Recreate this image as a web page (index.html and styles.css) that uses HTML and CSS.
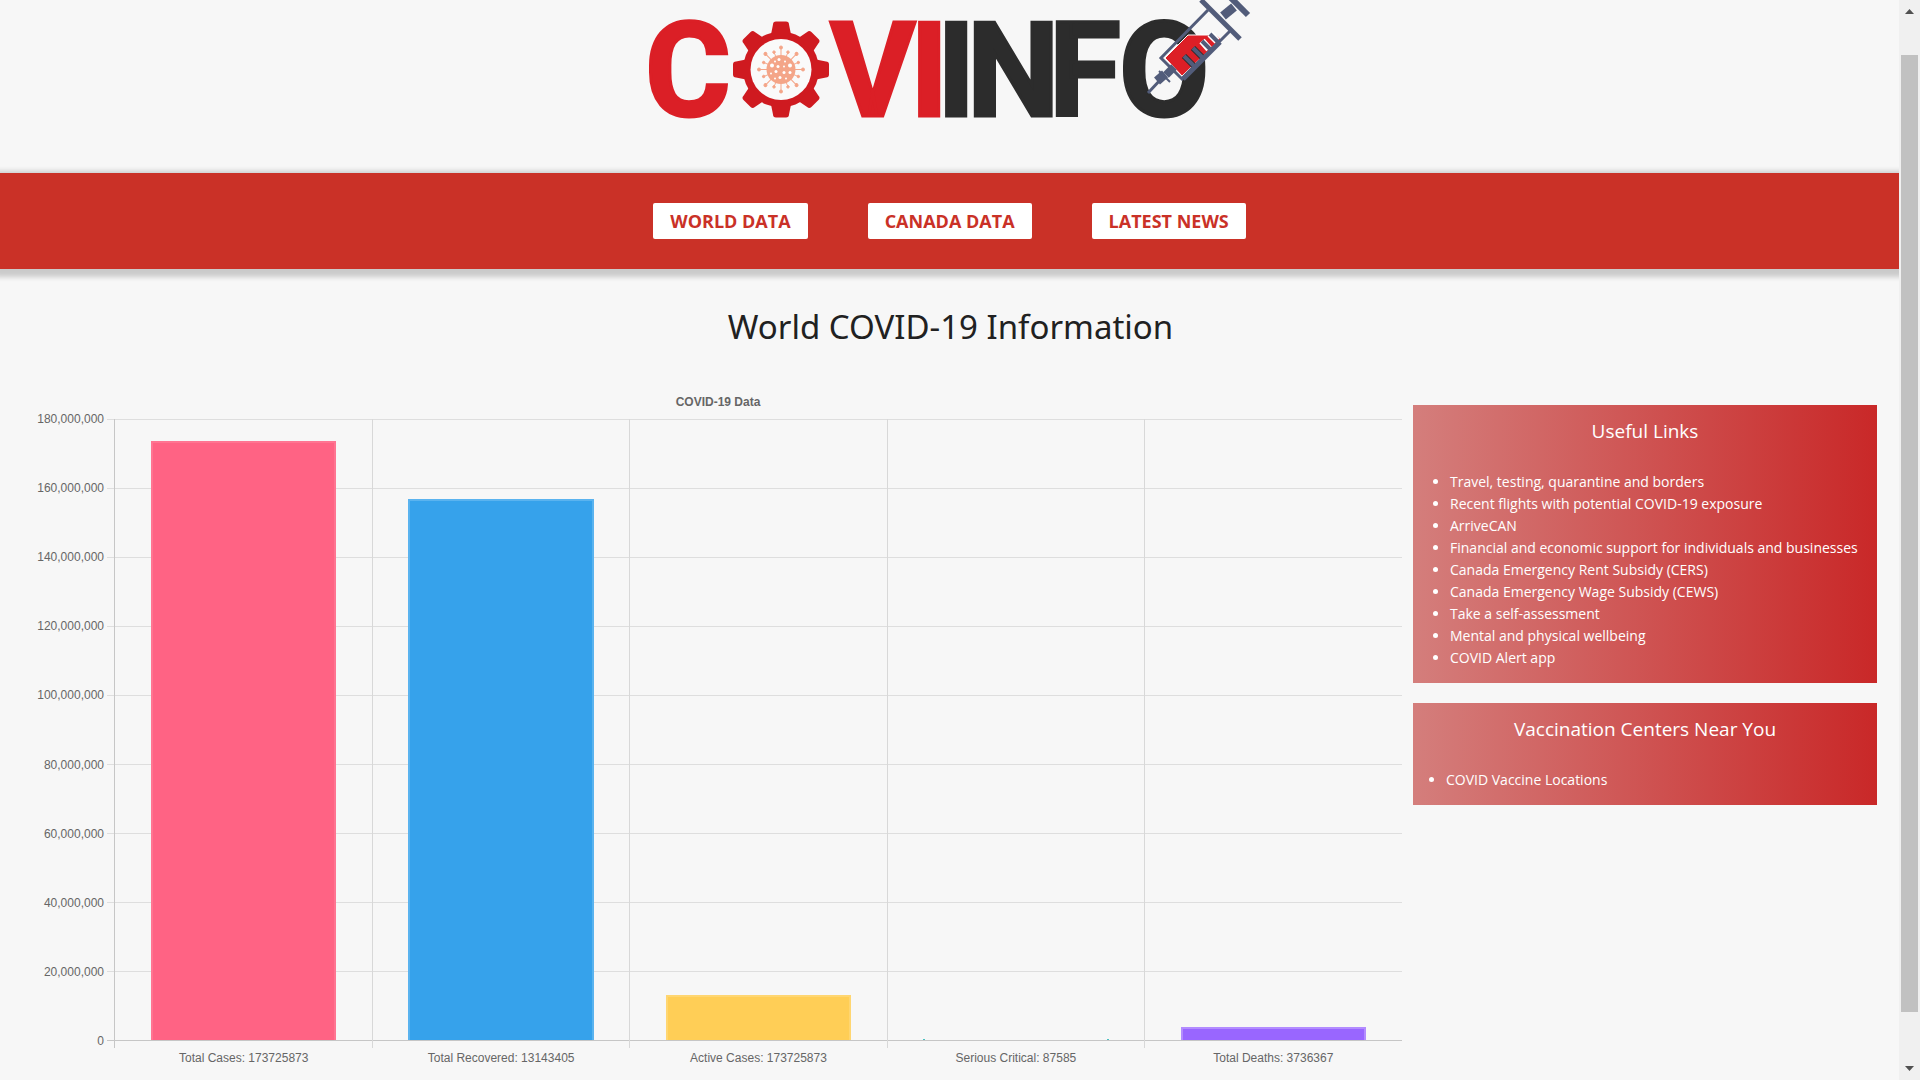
FILE: index.html
```html
<!DOCTYPE html>
<html lang="en">
<head>
<meta charset="utf-8">
<meta name="viewport" content="width=device-width, initial-scale=1">
<title>CoviInfo</title>
<link rel="stylesheet" href="styles.css">
</head>
<body>
<div class="page">
  <header class="header">
    <svg class="logo" viewBox="630 0 640 130" role="img" aria-label="CoviInfo">
      <g class="logo-red">
        <text x="645" y="116">C</text>
        <text x="830" y="116">V</text>
        <text x="910" y="116">I</text>
      </g>
      <g class="logo-dark">
        <text x="937" y="116">I</text>
        <text x="967" y="116">N</text>
        <text x="1049" y="116">F</text>
        <text x="1119" y="116">O</text>
      </g>
      <g transform="translate(781 69.500)">
        <g fill="#cf1a20">
          <circle r="38"/>
          <g id="teeth">
            <path id="tooth" d="M-10-35 L-8-45 Q-8-48-5-48 H5 Q8-48 8-45 L10-35Z"/>
            <use href="#tooth" transform="rotate(90)"/>
            <use href="#tooth" transform="rotate(180)"/>
            <use href="#tooth" transform="rotate(270)"/>
          </g>
          <use href="#teeth" transform="rotate(45)"/>
        </g>
        <circle r="30.500" fill="#fafafa"/>
        <g fill="#f4a588" stroke="#f4a588">
          <circle r="14.500" stroke="none"/>
          <g id="spikes">
            <g id="spike"><path d="M0-13V-22"/><circle cy="-22" r="1.500"/></g>
            <use href="#spike" transform="rotate(90)"/>
            <use href="#spike" transform="rotate(180)"/>
            <use href="#spike" transform="rotate(270)"/>
          </g>
          <use href="#spikes" transform="rotate(45)"/>
          <g transform="scale(.85)">
            <use href="#spikes" transform="rotate(22)"/>
            <use href="#spikes" transform="rotate(68)"/>
          </g>
        </g>
        <g fill="#fff">
          <circle cx="-2" cy="-10" r="1.500"/><circle cx="4" cy="-8" r="1"/><circle cx="-9" cy="-4" r="2"/>
          <circle cx="9" cy="-4" r="2"/><circle cx="-3" cy="-3" r="1.500"/><circle cx="3" cy="-3" r="1"/>
          <circle cx="-5" cy="2" r="1.500"/><circle cx="3" cy="3" r="1.500"/><circle cx="9" cy="3" r="1.500"/>
          <circle cx="-10" cy="4" r="1"/><circle cx="-1" cy="8" r="1.500"/><circle cx="5" cy="9" r="1"/>
          <circle cx="-6" cy="9" r="1"/><circle cx="-6" cy="-8" r="1"/>
        </g>
      </g>
      <g>
        <path d="M1165 58 1188 35H1216L1221 39 1182 76Z" fill="#dd1f26" stroke="#fff" stroke-width="1"/>
        <path d="M1208 10 1161 58 1182 79 1230 31" fill="none" stroke="#525c7a" stroke-width="3"/>
        <path d="M1202 41 1209 49M1210 34 1217 41" fill="none" stroke="#fff" stroke-width="7"/>
        <path d="M1184 56 1194 66M1193 48 1203 58" fill="none" stroke="#2c2c2c" stroke-width="6"/>
        <path d="M1184 56 1194 66M1193 48 1203 58M1202 41 1211 50M1210 34 1219 43" fill="none" stroke="#525c7a" stroke-width="4"/>
        <path d="M1183 79 1220 42" stroke="#525c7a" stroke-width="5"/>
        <path d="M1201 0 1240 39" stroke="#525c7a" stroke-width="5"/>
        <path d="M1228-5 1248 15" stroke="#525c7a" stroke-width="6"/>
        <path d="M1223 16 1234 7" stroke="#525c7a" stroke-width="9"/>
        <path d="M1148 93 1162 78" stroke="#525c7a" stroke-width="3"/>
        <path d="M1157 81 1165 74" stroke="#525c7a" stroke-width="9"/>
        <path d="M1159 71 1170 82" stroke="#525c7a" stroke-width="2"/>
        <path d="M1166 75 1174 67" stroke="#525c7a" stroke-width="8"/>
      </g>
    </svg>
  </header>

  <nav class="nav" aria-label="Main">
    <button class="nav-button" type="button">WORLD DATA</button>
    <button class="nav-button" type="button">CANADA DATA</button>
    <button class="nav-button" type="button">LATEST NEWS</button>
  </nav>

  <main class="main">
    <h1 class="title">World COVID-19 Information</h1>
    <div class="content">
      <figure class="chart">
        <figcaption class="chart-title">COVID-19 Data</figcaption>
        <div class="y-axis">
          <span>180,000,000</span><span>160,000,000</span><span>140,000,000</span><span>120,000,000</span><span>100,000,000</span><span>80,000,000</span><span>60,000,000</span><span>40,000,000</span><span>20,000,000</span><span>0</span>
        </div>
        <div class="plot">
          <div class="rows"><i></i><i></i><i></i><i></i><i></i><i></i><i></i><i></i><i></i></div>
          <div class="columns"><i></i><i></i><i></i><i></i><i></i></div>
          <div class="bars">
            <div class="bar bar-cases" style="height:96.5%"></div>
            <div class="bar bar-recovered" style="height:87.2%"></div>
            <div class="bar bar-active" style="height:7.3%"></div>
            <div class="bar bar-critical" style="height:0.05%"></div>
            <div class="bar bar-deaths" style="height:2.1%"></div>
          </div>
        </div>
        <div class="x-axis">
          <span>Total Cases: 173725873</span><span>Total Recovered: 13143405</span><span>Active Cases: 173725873</span><span>Serious Critical: 87585</span><span>Total Deaths: 3736367</span>
        </div>
      </figure>

      <aside class="sidebar">
        <section class="card">
          <h2 class="card-title">Useful Links</h2>
          <ul class="links">
            <li><a href="#">Travel, testing, quarantine and borders</a></li>
            <li><a href="#">Recent flights with potential COVID-19 exposure</a></li>
            <li><a href="#">ArriveCAN</a></li>
            <li><a href="#">Financial and economic support for individuals and businesses</a></li>
            <li><a href="#">Canada Emergency Rent Subsidy (CERS)</a></li>
            <li><a href="#">Canada Emergency Wage Subsidy (CEWS)</a></li>
            <li><a href="#">Take a self-assessment</a></li>
            <li><a href="#">Mental and physical wellbeing</a></li>
            <li><a href="#">COVID Alert app</a></li>
          </ul>
        </section>
        <section class="card">
          <h2 class="card-title">Vaccination Centers Near You</h2>
          <ul class="links links-centers">
            <li><a href="#">COVID Vaccine Locations</a></li>
          </ul>
        </section>
      </aside>
    </div>
  </main>
</div>
<div class="scrollbar" aria-hidden="true">
  <svg class="arrow" viewBox="0 0 9 5"><path d="M0 5 4.500 0 9 5Z"/></svg>
  <div class="track"><div class="thumb"></div></div>
  <svg class="arrow" viewBox="0 0 9 5"><path d="M0 0 4.500 5 9 0Z"/></svg>
</div>
</body>
</html>
```
FILE: styles.css
```css
* { box-sizing: border-box; }

body {
  margin: 0;
  display: grid;
  grid-template-columns: minmax(0, 1fr) 21px;
  min-height: 100vh;
  background: #f7f7f7;
  color: #212121;
  font-family: "Open Sans", "Noto Sans", sans-serif;
}

.page { display: flex; flex-direction: column; }

.header { display: flex; justify-content: center; padding-bottom: 43px; }
.logo { display: block; width: 640px; max-width: 100%; overflow: visible; }
.logo text { font-family: Roboto, sans-serif; font-size: 131px; font-weight: 700; stroke-width: 3px; }
.logo-red { fill: #db1f26; }
.logo-red text { stroke: #db1f26; }
.logo-dark { fill: #2c2c2c; }
.logo-dark text { stroke: #2c2c2c; }

.nav {
  display: flex;
  justify-content: center;
  gap: 60px;
  padding: 30px;
  background: #ca3127;
  box-shadow: 0 3px 5px 5px rgba(0, 0, 0, 0.18);
  clip-path: inset(-20px 0);
}
.nav-button {
  height: 36px;
  padding: 0 17px;
  border: 0;
  border-radius: 2px;
  background: #fff;
  color: #ca3127;
  font: 700 18px/36px "Open Sans", "Noto Sans", sans-serif;
}

.main { flex: 1; display: flex; flex-direction: column; padding: 32px 22px 15px 24px; }
.title {
  margin: 0;
  font: 400 33px/52px "Noto Sans", "Open Sans", sans-serif;
  text-align: center;
}

.content {
  flex: 1;
  display: grid;
  grid-template-columns: minmax(0, 1fr) 464px;
  padding-top: 42px;
}

.chart {
  display: grid;
  grid-template-columns: 90px minmax(0, 1fr);
  grid-template-rows: auto minmax(400px, 1fr) auto;
  margin: 0;
  padding-right: 11px;
  color: #666;
  font: 12px/14px "Liberation Sans", sans-serif;
}
.chart-title { grid-column: 1 / -1; padding-left: 10px; margin-bottom: 10px; font-weight: 700; text-align: center; }
.y-axis {
  display: flex;
  flex-direction: column;
  justify-content: space-between;
  margin: -7px 0;
  padding-right: 10px;
  text-align: right;
}
.plot { display: grid; }
.rows, .columns, .bars { grid-area: 1 / 1; }
.rows { display: flex; flex-direction: column; margin-left: -7px; border-bottom: 1px solid #c6c6c6; }
.rows i { flex: 1; border-top: 1px solid #dedede; }
.columns { display: flex; margin-bottom: -7px; }
.columns i { flex: 1; border-left: 1px solid #d8d8d8; }
.columns i:first-child { border-color: #c6c6c6; }
.bars { display: grid; grid-template-columns: repeat(5, 1fr); align-items: end; justify-items: center; padding: 0 0 1px 1px; }
.bar { width: 72%; border: 2px solid; border-bottom: 0; }
.bar-cases { background: #ff6384; border-color: #ff7592; }
.bar-recovered { background: #36a2eb; border-color: #5ab3ef; }
.bar-active { background: #ffce56; border-color: #ffd671; }
.bar-critical { border-width: 0 2px; border-color: #4bc0c0; min-height: 1px; }
.bar-deaths { background: #9966ff; border-color: #b38cff; }
.x-axis { grid-column: 2; display: grid; grid-template-columns: repeat(5, 1fr); padding: 10px 0 0 1px; text-align: center; }

.sidebar { display: flex; flex-direction: column; gap: 20px; padding-top: 10px; }
.card { padding: 10px 14px 14px 0; background: linear-gradient(to right, #d47e7c, #c92828); color: #fff; }
.card-title { margin: 0 0 24px 14px; font-size: 19px; line-height: 32px; font-weight: 400; text-align: center; }
.links { margin: 0; padding-left: 37px; font-size: 14px; line-height: 22px; }
.links-centers { padding-left: 33px; }
.links a { color: inherit; text-decoration: none; white-space: nowrap; }

.scrollbar {
  display: flex;
  flex-direction: column;
  align-items: center;
  padding: 9px 0;
  background: #f0f0f0;
}
.arrow { width: 9px; height: 5px; fill: #505050; }
.track { flex: 1; width: 17px; padding: 41px 0 54px; }
.thumb { height: 100%; background: #c1c1c1; }
```
